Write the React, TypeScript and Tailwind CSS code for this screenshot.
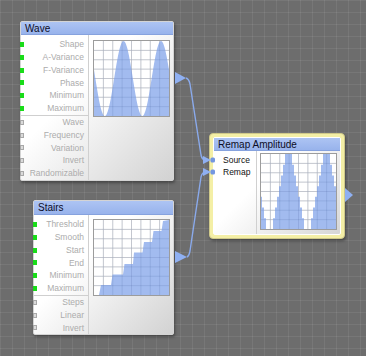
import React from 'react';

type Port = 'green' | 'gray';

function Row({ label, port }: { label: string; port: Port }) {
  return (
    <div className="relative flex h-[12.8px] items-center justify-end pr-[4px] text-[8.5px] leading-none text-[#acacac]">
      {port === 'green' ? (
        <span className="absolute left-[-1px] top-[4px] h-[5px] w-[4px] bg-[#19dc19]" />
      ) : (
        <span className="absolute left-[-1px] top-[4px] h-[5px] w-[4px] border border-[#a8a8a8] bg-[#dadada]" />
      )}
      {label}
    </div>
  );
}

const S = 75;

function Graph({ d }: { d: string }) {
  const lines = [1, 2, 3, 4, 5, 6, 7].map((i) => (i * S) / 8);
  return (
    <div className="h-[77px] w-[77px] border border-[#9c9c9c] bg-white">
      <svg width="75" height="75" viewBox="0 0 75 75" className="block">
        {lines.map((p) => (
          <g key={p}>
            <line x1={p} y1={0} x2={p} y2={S} stroke="#dcdcdc" strokeWidth="1" />
            <line x1={0} y1={p} x2={S} y2={p} stroke="#dcdcdc" strokeWidth="1" />
          </g>
        ))}
        <path d={d} fill="#a2bbef" />
        {lines.map((p) => (
          <g key={'o' + p}>
            <line x1={p} y1={0} x2={p} y2={S} stroke="rgba(40,60,120,0.13)" strokeWidth="1" />
            <line x1={0} y1={p} x2={S} y2={p} stroke="rgba(40,60,120,0.13)" strokeWidth="1" />
          </g>
        ))}
      </svg>
    </div>
  );
}

function sinePath(peak: number, period: number) {
  let d = `M0,${S}`;
  for (let x = 0; x <= S; x += 0.5) {
    const v = 0.5 + 0.5 * Math.cos((2 * Math.PI * (x - peak)) / period);
    d += ` L${x.toFixed(2)},${(S - v * S).toFixed(2)}`;
  }
  return d + ` L${S},${S} Z`;
}

function remapPath(peak: number, period: number) {
  let d = `M0,${S}`;
  for (let x = 0; x < S; x += 1) {
    const v = 0.5 + 0.5 * Math.cos((2 * Math.PI * (x + 0.5 - peak)) / period);
    const q = Math.round(v * 7) / 7;
    const y = (S - q * S).toFixed(2);
    d += ` L${x},${y} L${x + 1},${y}`;
  }
  return d + ` L${S},${S} Z`;
}

const stairsPts: [number, number][] = [
  [5, 75], [7, 65], [17, 65], [18.5, 54.5], [29, 54.5], [30.5, 44], [39, 44], [40, 32.5],
  [48.5, 32.5], [50, 22], [58, 22], [59.5, 11], [67.5, 11], [69, 1], [75, 0],
];
const stairsD = 'M5,75 ' + stairsPts.map(([x, y]) => `L${x},${y}`).join(' ') + ' L75,75 Z';

const headerCls =
  'bg-[linear-gradient(to_bottom,#adc4f3,#98b3ec)] border-b border-[#86a2de] px-[4px] text-[10px] leading-[13px] text-[#0d0d26]';

export default function App() {
  return (
    <div className="relative h-[356px] w-[366px] overflow-hidden bg-[#6d6d6d] bg-[linear-gradient(to_right,rgba(255,255,255,0.07)_1px,transparent_1px),linear-gradient(to_bottom,rgba(255,255,255,0.07)_1px,transparent_1px)] bg-[size:12px_12px] font-['Liberation_Sans',Arial,sans-serif]">
      {/* Wave node */}
      <div className="absolute left-[20px] top-[21px] flex h-[160px] w-[154px] flex-col rounded-[2px] border border-[#d4d4d4] bg-[linear-gradient(135deg,#ffffff_40%,#d2d2d2)] shadow-[1px_2px_3px_rgba(0,0,0,0.35)]">
        <div className={headerCls + ' h-[13px]'}>Wave</div>
        <div className="flex flex-1">
          <div className="w-[68px] border-r border-[#d0d0d0] pt-[3px]">
            {['Shape', 'A-Variance', 'F-Variance', 'Phase', 'Minimum', 'Maximum'].map((l) => (
              <Row key={l} label={l} port="green" />
            ))}
            <div className="h-px bg-[#cfcfcf]" />
            {['Wave', 'Frequency', 'Variation', 'Invert', 'Randomizable'].map((l) => (
              <Row key={l} label={l} port="gray" />
            ))}
          </div>
          <div className="pl-[4px] pt-[5px]">
            <Graph d={sinePath(29.5, 37.5)} />
          </div>
        </div>
      </div>

      {/* Stairs node */}
      <div className="absolute left-[33px] top-[200px] flex h-[135px] w-[141px] flex-col rounded-[2px] border border-[#d4d4d4] bg-[linear-gradient(135deg,#ffffff_40%,#d2d2d2)] shadow-[1px_2px_3px_rgba(0,0,0,0.35)]">
        <div className={headerCls + ' h-[14px] leading-[14px]'}>Stairs</div>
        <div className="flex flex-1">
          <div className="w-[55px] border-r border-[#d0d0d0] pt-[3px]">
            {['Threshold', 'Smooth', 'Start', 'End', 'Minimum', 'Maximum'].map((l) => (
              <Row key={l} label={l} port="green" />
            ))}
            <div className="h-px bg-[#cfcfcf]" />
            {['Steps', 'Linear', 'Invert'].map((l) => (
              <Row key={l} label={l} port="gray" />
            ))}
          </div>
          <div className="pl-[4px] pt-[4px]">
            <Graph d={stairsD} />
          </div>
        </div>
      </div>

      {/* Remap Amplitude node (selected) */}
      <div className="absolute left-[209px] top-[133px] h-[106px] w-[136px] rounded-[4px] border border-[#cfc98a] bg-[#f4efa6] p-[3px] shadow-[1px_2px_3px_rgba(0,0,0,0.35)]">
        <div className="flex h-full w-full flex-col rounded-[2px] border border-white bg-[linear-gradient(135deg,#ffffff_40%,#d6d6d6)]">
          <div className={headerCls + ' h-[13px]'}>Remap Amplitude</div>
          <div className="flex flex-1">
            <div className="w-[43px] border-r border-[#d0d0d0] pl-[9px] pt-[3px] text-[8.5px] text-[#111]">
              <div className="flex h-[12px] items-center leading-none">Source</div>
              <div className="flex h-[12px] items-center leading-none">Remap</div>
            </div>
            <div className="pl-[3px] pt-[2px]">
              <Graph d={remapPath(27.5, 38)} />
            </div>
          </div>
        </div>
      </div>

      {/* Wires and arrows */}
      <svg className="pointer-events-none absolute inset-0" width="366" height="356" viewBox="0 0 366 356">
        <path d="M186,78 Q189,79 190,84 L201,155 Q202,160 206,160" fill="none" stroke="#8aaaec" strokeWidth="1.4" />
        <path d="M187,257 Q189,256 190,251 L201,177 Q202,172 206,172" fill="none" stroke="#8aaaec" strokeWidth="1.4" />
        <polygon points="175,72 186,78 175,84" fill="#8fb0f2" />
        <polygon points="175,251 187,257 175,263" fill="#8fb0f2" />
        <polygon points="345,188 353,195 345,202" fill="#8fb0f2" />
        <polygon points="203,156 211,160 203,164" fill="#8fb0f2" />
        <polygon points="203,168 211,172 203,176" fill="#8fb0f2" />
        <rect x="210.5" y="157.5" width="4.5" height="5" rx="1.5" fill="#7497e0" />
        <rect x="210.5" y="169.5" width="4.5" height="5" rx="1.5" fill="#7497e0" />
      </svg>
    </div>
  );
}
